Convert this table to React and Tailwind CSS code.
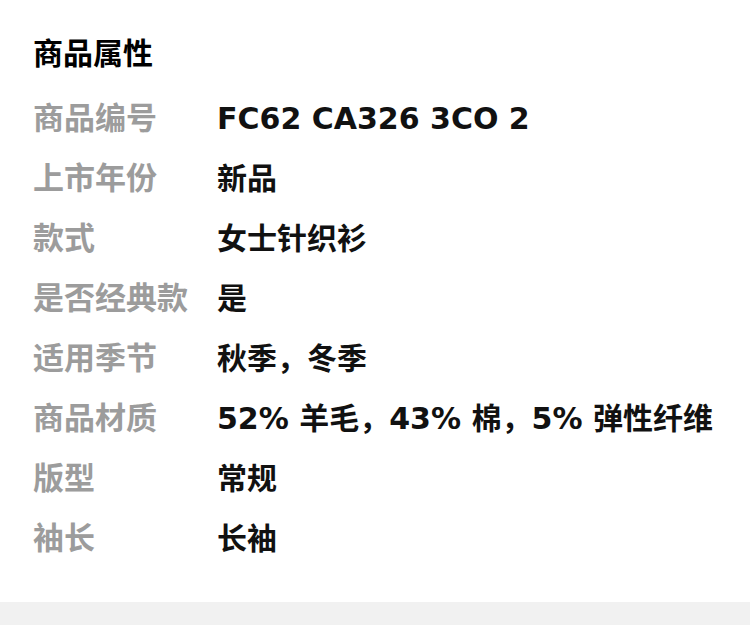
import React from 'react';

const attrs = [
  ['商品编号', 'FC62 CA326 3CO 2'],
  ['上市年份', '新品'],
  ['款式', '女士针织衫'],
  ['是否经典款', '是'],
  ['适用季节', '秋季，冬季'],
  ['商品材质', '52% 羊毛，43% 棉，5% 弹性纤维'],
  ['版型', '常规'],
  ['袖长', '长袖'],
];

const App = () => {
  return (
    <div
      className="w-[750px] bg-white"
      style={{ fontFamily: '"DejaVu Sans", "Noto Sans CJK SC", sans-serif' }}
    >
      <div className="px-[33px] pt-[24px] pb-[34px]">
        <h2 className="h-[60px] leading-[60px] text-[30px] font-bold text-black">商品属性</h2>
        <div className="mt-[4px]">
          {attrs.map(([label, value]) => (
            <div key={label} className="flex h-[60px] items-center">
              <span className="w-[184px] shrink-0 text-[31px] font-bold text-[#9c9c9c]">{label}</span>
              <span className="text-[30px] font-bold text-[#111111] whitespace-nowrap">{value}</span>
            </div>
          ))}
        </div>
      </div>
      <div className="h-[30px] bg-[#f1f1f1]" />
    </div>
  );
};

export default App;
